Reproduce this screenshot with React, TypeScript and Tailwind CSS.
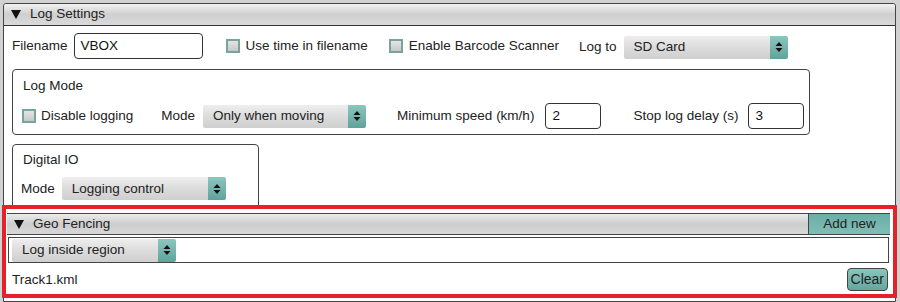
import React from 'react';

const font = { fontFamily: '"Liberation Sans", Arial, sans-serif' };

function Checkbox() {
    return (
        <span className="inline-block w-[14px] h-[14px] border-2 border-[#7aa3a0] bg-gradient-to-b from-[#e4e4e4] to-[#c8c8c8] shrink-0" />
    );
}

function Arrows() {
    return (
        <svg width="8" height="12" viewBox="0 0 8 12">
            <path d="M4 1 L7.5 5 L0.5 5 Z" fill="#111" />
            <path d="M4 11 L7.5 7 L0.5 7 Z" fill="#111" />
        </svg>
    );
}

function Select({ value, width }: { value: string; width: string }) {
    return (
        <div className={`flex h-[23px] rounded-[2px] overflow-hidden shrink-0 ${width}`}>
            <div className="flex-1 flex items-center pl-[10px] bg-gradient-to-b from-[#eeeeee] via-[#dcdcdc] to-[#cfcfcf] text-[#222] whitespace-nowrap">
                {value}
            </div>
            <div className="w-[18px] flex items-center justify-center bg-gradient-to-b from-[#8cc6bf] to-[#5fa39b]">
                <Arrows />
            </div>
        </div>
    );
}

function TextBox({ value, width }: { value: string; width: string }) {
    return (
        <div className={`h-[26px] shrink-0 border border-[#333] rounded-[4px] bg-white flex items-center pl-[6px] text-[#111] ${width}`}>
            {value}
        </div>
    );
}

function HeaderBar({ title }: { title: string }) {
    return (
        <div className="flex items-center gap-[9px] pl-[7px] text-[#222]">
            <svg width="10" height="9" viewBox="0 0 10 9">
                <path d="M0 0 L10 0 L5 9 Z" fill="#111" />
            </svg>
            <span>{title}</span>
        </div>
    );
}

export default function App() {
    return (
        <div className="w-[900px] h-[302px] bg-[#d2d2d2] pt-[3px] pl-[3px] overflow-hidden text-[13.5px] whitespace-nowrap" style={font}>
            <div className="w-[893px] h-[299px] border border-[#444] rounded-t-[3px] bg-white flex flex-col">
                <div className="h-[22px] shrink-0 border-b border-[#333] bg-gradient-to-b from-[#f2f2f2] via-[#cfcfcf] to-[#dadada] flex items-center rounded-t-[3px]">
                    <HeaderBar title="Log Settings" />
                </div>

                <div className="h-[179px] shrink-0 overflow-hidden pl-[8px] text-[#222]">
                    <div className="flex items-center h-[24px] mt-[8px]">
                        <span>Filename</span>
                        <div className="ml-[6px]">
                            <TextBox value="VBOX" width="w-[129px]" />
                        </div>
                        <div className="ml-[23px] flex items-center gap-[6px]">
                            <Checkbox />
                            <span>Use time in filename</span>
                        </div>
                        <div className="ml-[21px] flex items-center gap-[6px]">
                            <Checkbox />
                            <span>Enable Barcode Scanner</span>
                        </div>
                        <span className="ml-[20px] mt-[2px]">Log to</span>
                        <div className="ml-[7px] mt-[2px]">
                            <Select value="SD Card" width="w-[164px]" />
                        </div>
                    </div>

                    <div className="mt-[11px] w-[798px] h-[66px] border border-[#444] rounded-[4px] pl-[9px]">
                        <div className="mt-[6px] ml-[1px]">Log Mode</div>
                        <div className="flex items-center mt-[7px]">
                            <Checkbox />
                            <span className="ml-[5px]">Disable logging</span>
                            <span className="ml-[28px]">Mode</span>
                            <div className="ml-[8px]">
                                <Select value="Only when moving" width="w-[163px]" />
                            </div>
                            <span className="ml-[31px]">Minimum speed (km/h)</span>
                            <div className="ml-[11px]">
                                <TextBox value="2" width="w-[56px]" />
                            </div>
                            <span className="ml-[32px]">Stop log delay (s)</span>
                            <div className="ml-[10px]">
                                <TextBox value="3" width="w-[56px]" />
                            </div>
                        </div>
                    </div>

                    <div className="mt-[9px] w-[247px] h-[80px] border border-[#444] rounded-[4px] pl-[10px]">
                        <div className="mt-[5px]">Digital IO</div>
                        <div className="flex items-center mt-[7px] -ml-[2px]">
                            <span>Mode</span>
                            <div className="ml-[7px]">
                                <Select value="Logging control" width="w-[164px]" />
                            </div>
                        </div>
                    </div>
                </div>

                <div className="-mx-[2px] h-[93px] border-4 border-[#e8202a] bg-white flex flex-col">
                    <div className="mt-[4px] ml-[1px] mr-[3px] flex h-[22px] border-y border-[#444]">
                        <div className="flex-1 flex items-center bg-gradient-to-b from-[#ececec] via-[#cdcdcd] to-[#d8d8d8]">
                            <HeaderBar title="Geo Fencing" />
                        </div>
                        <div className="w-[82px] border-l border-[#444] bg-gradient-to-b from-[#6aaea6] to-[#7fbeb6] flex items-center justify-center text-[#222]">
                            Add new
                        </div>
                    </div>
                    <div className="mt-[2px] ml-[2px] mr-[4px] h-[26px] border border-[#444] flex items-center pl-[3px]">
                        <Select value="Log inside region" width="w-[164px]" />
                    </div>
                    <div className="flex items-center justify-between pl-[6px] pr-[5px] mt-[5px] text-[#222]">
                        <span className="mt-[2px]">Track1.kml</span>
                        <div className="h-[23px] px-[3px] border border-[#444] rounded-[4px] bg-gradient-to-b from-[#8ac4bd] to-[#64a79f] flex items-center text-[14px]">
                            Clear
                        </div>
                    </div>
                </div>
            </div>
        </div>
    );
}
